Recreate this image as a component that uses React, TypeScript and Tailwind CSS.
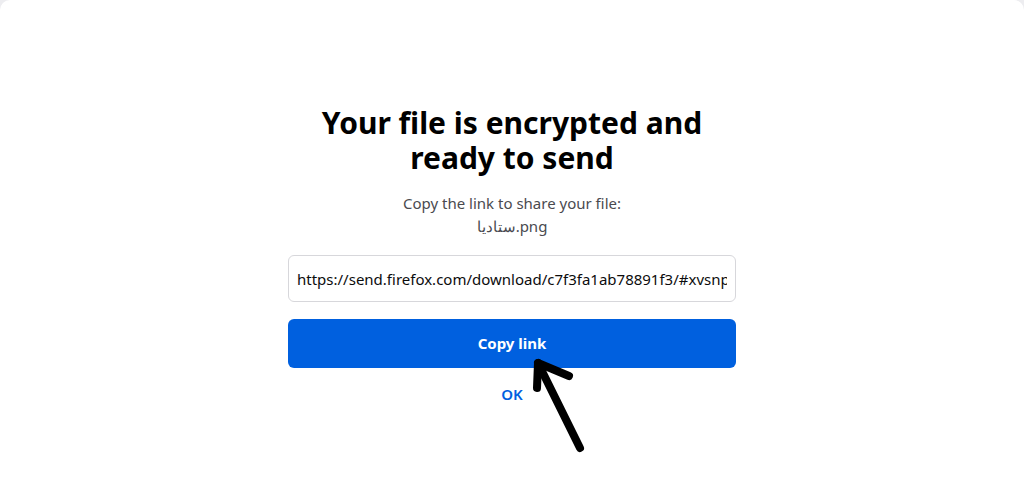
export default function App() {
  return (
    <div className="h-[477px] w-full overflow-hidden bg-[#ededf0] font-['Noto_Sans','Open_Sans',sans-serif]">
      <main className="flex h-full w-full flex-col items-center rounded-t-[10px] bg-white pt-[105px]">
        <section className="relative flex w-[448px] flex-col items-center text-center">
          <h1 className="w-[420px] text-[30px] font-bold leading-[35px] text-black">
            Your file is encrypted and ready to send
          </h1>
          <p className="mt-[17px] text-[15px] leading-[22px] text-[#4a4a4f]">
            Copy the link to share your file:
          </p>
          <p className="mt-[1px] text-[15px] leading-[22px] text-[#4a4a4f]" dir="ltr">
            ستاديا.png
          </p>

          <input
            readOnly
            value="https://send.firefox.com/download/c7f3fa1ab78891f3/#xvsnp4LkT0aWd5F2"
            aria-label="Share link"
            className="mt-[18px] h-[47px] w-full rounded-[6px] border border-[#d7d7db] bg-white px-[8px] text-[15px] text-[#0c0c0d] focus:outline-none"
          />

          <button className="mt-[17px] h-[49px] w-full rounded-[6px] bg-[#0060df] text-[15px] font-bold text-white">
            Copy link
          </button>

          <button className="mt-[15px] text-[15px] font-semibold text-[#0060df]">
            OK
          </button>

          <svg
            className="pointer-events-none absolute left-[240px] top-[244px]"
            width="70"
            height="110"
            viewBox="0 0 70 110"
            fill="none"
            stroke="black"
            strokeWidth="8"
            strokeLinecap="round"
            strokeLinejoin="round"
          >
            <path d="M52 99 L10 14" />
            <path d="M9 39 L10 14 L41 27" />
          </svg>
        </section>
      </main>
    </div>
  );
}
